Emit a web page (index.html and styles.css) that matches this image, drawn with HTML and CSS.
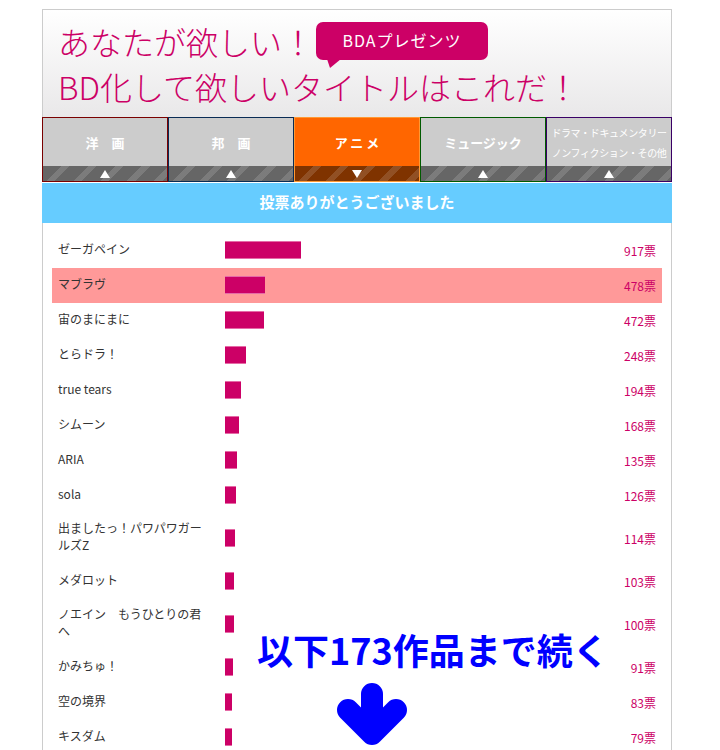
FILE: index.html
```html
<!DOCTYPE html>
<html lang="ja">
<head>
    <meta charset="UTF-8">
    <title>あなたが欲しい！BD化して欲しいタイトルはこれだ！</title>
    <link rel="stylesheet" href="styles.css">
</head>
<body>

    <div class="page">
        <!-- ヘッダー -->
        <div class="header">
            <h1 class="title">あなたが欲しい！<br>BD化して欲しいタイトルはこれだ！</h1>
            <span class="badge">BDAプレゼンツ</span>
        </div>

        <!-- ジャンルタブ -->
        <ul class="tabs">
            <li class="tab tab-yoga"><span class="tab-label">洋　画</span><span class="tab-strip"><i class="tri-up"></i></span></li>
            <li class="tab tab-houga"><span class="tab-label">邦　画</span><span class="tab-strip"><i class="tri-up"></i></span></li>
            <li class="tab tab-anime active"><span class="tab-label spaced">アニメ</span><span class="tab-strip"><i class="tri-down"></i></span></li>
            <li class="tab tab-music"><span class="tab-label">ミュージック</span><span class="tab-strip"><i class="tri-up"></i></span></li>
            <li class="tab tab-other"><span class="tab-label small">ドラマ・ドキュメンタリー<br>ノンフィクション・その他</span><span class="tab-strip"><i class="tri-up"></i></span></li>
        </ul>

        <div class="notice">投票ありがとうございました</div>

        <!-- ランキング -->
        <div class="ranking">
            <div class="row"><span class="name">ゼーガペイン</span><span class="bar-cell"><span class="bar" style="width:76px"></span></span><span class="votes">917票</span></div>
            <div class="row voted"><span class="name">マブラヴ</span><span class="bar-cell"><span class="bar" style="width:40px"></span></span><span class="votes">478票</span></div>
            <div class="row"><span class="name">宙のまにまに</span><span class="bar-cell"><span class="bar" style="width:39px"></span></span><span class="votes">472票</span></div>
            <div class="row"><span class="name">とらドラ！</span><span class="bar-cell"><span class="bar" style="width:21px"></span></span><span class="votes">248票</span></div>
            <div class="row"><span class="name">true tears</span><span class="bar-cell"><span class="bar" style="width:16px"></span></span><span class="votes">194票</span></div>
            <div class="row"><span class="name">シムーン</span><span class="bar-cell"><span class="bar" style="width:14px"></span></span><span class="votes">168票</span></div>
            <div class="row"><span class="name">ARIA</span><span class="bar-cell"><span class="bar" style="width:12px"></span></span><span class="votes">135票</span></div>
            <div class="row"><span class="name">sola</span><span class="bar-cell"><span class="bar" style="width:11px"></span></span><span class="votes">126票</span></div>
            <div class="row"><span class="name">出ましたっ！パワパワガールズZ</span><span class="bar-cell"><span class="bar" style="width:10px"></span></span><span class="votes">114票</span></div>
            <div class="row"><span class="name">メダロット</span><span class="bar-cell"><span class="bar" style="width:9px"></span></span><span class="votes">103票</span></div>
            <div class="row"><span class="name">ノエイン　もうひとりの君へ</span><span class="bar-cell"><span class="bar" style="width:9px"></span></span><span class="votes">100票</span></div>
            <div class="row"><span class="name">かみちゅ！</span><span class="bar-cell"><span class="bar" style="width:8px"></span></span><span class="votes">91票</span></div>
            <div class="row"><span class="name">空の境界</span><span class="bar-cell"><span class="bar" style="width:7px"></span></span><span class="votes">83票</span></div>
            <div class="row"><span class="name">キスダム</span><span class="bar-cell"><span class="bar" style="width:7px"></span></span><span class="votes">79票</span></div>
        </div>

        <!-- 続きの案内 -->
        <div class="more">以下173作品まで続く</div>
        <svg class="more-arrow" width="90" height="90" viewBox="0 0 90 90">
            <path d="M42 14 V54 M18 30 L42 54 L66 30" fill="none" stroke="#0000ff" stroke-width="22" stroke-linecap="round" stroke-linejoin="round"/>
        </svg>
    </div>

</body>
</html>
```

FILE: styles.css
```css
/* 基本 */
body {
    margin: 0;
    background: #fff;
    font-family: "Noto Sans CJK JP", "Noto Sans", sans-serif;
    color: #333;
}

.page {
    position: relative;
    width: 630px;
    margin: 9px 0 0 42px;
}

/* ヘッダー */
.header {
    position: relative;
    height: 108px;
    border: 1px solid #ccc;
    border-bottom: none;
    background: linear-gradient(#fff, #e9e8e9);
    box-sizing: border-box;
}

.title {
    margin: 0;
    padding: 9px 0 0 15px;
    font-size: 32px;
    font-weight: 300;
    line-height: 45px;
    color: #cc0066;
}

.badge {
    position: absolute;
    left: 273px;
    top: 12px;
    width: 172px;
    height: 38px;
    line-height: 37px;
    border-radius: 7px;
    background: #cc0066;
    color: #fff;
    font-size: 16px;
    letter-spacing: 1px;
    text-align: center;
}

.badge::after {
    content: "";
    position: absolute;
    left: 11px;
    bottom: -8px;
    border-left: 3px solid transparent;
    border-right: 11px solid transparent;
    border-top: 9px solid #cc0066;
}

/* タブ */
.tabs {
    display: flex;
    margin: 0;
    padding: 0;
    list-style: none;
}

.tab {
    display: flex;
    flex-direction: column;
    width: 126px;
    height: 65px;
    border: 1px solid #333;
    box-sizing: border-box;
    background: #cccccc;
}

.tab-yoga { border-color: #7a0000; }
.tab-houga { border-color: #0a2c55; }
.tab-anime { border-color: #ff9933; }
.tab-music { border-color: #005a00; }
.tab-other { border-color: #3a0066; }

.tab.active {
    background: #ff6600;
}

.tab-label {
    flex: 1;
    display: flex;
    align-items: center;
    justify-content: center;
    color: #fff;
    font-size: 13px;
    font-weight: bold;
    text-align: center;
}

.tab-label.spaced {
    letter-spacing: 3px;
    padding-left: 3px;
}

.tab-label.small {
    font-size: 10px;
    font-weight: normal;
    line-height: 20px;
    letter-spacing: -0.4px;
    padding-top: 1px;
}

.tab-strip {
    display: flex;
    align-items: flex-end;
    justify-content: center;
    height: 15px;
    padding-bottom: 3px;
    box-sizing: border-box;
    background:
        repeating-linear-gradient(135deg, rgba(255,255,255,0) 0 13px, rgba(255,255,255,0.14) 13px 19px),
        rgba(0, 0, 0, 0.5);
}

.tri-up {
    width: 0;
    height: 0;
    border-left: 5px solid transparent;
    border-right: 5px solid transparent;
    border-bottom: 8px solid #fff;
}

.tri-down {
    width: 0;
    height: 0;
    border-left: 5px solid transparent;
    border-right: 5px solid transparent;
    border-top: 8px solid #fff;
}

/* お知らせ */
.notice {
    height: 40px;
    line-height: 38px;
    margin-top: 1px;
    background: #66ccff;
    color: #fff;
    font-size: 15px;
    font-weight: bold;
    text-align: center;
}

/* ランキング */
.ranking {
    border-left: 1px solid #ccc;
    border-right: 1px solid #ccc;
    padding: 10px 9px;
}

.row {
    display: grid;
    grid-template-columns: 150px 1fr auto;
    column-gap: 17px;
    align-items: center;
    padding: 8px 6px 9px;
    font-size: 12px;
    line-height: 17px;
}

.row .name {
    position: relative;
    top: -2px;
}

.row.voted {
    background: #ff9999;
}

.bar-cell {
    display: flex;
    align-items: center;
}

.bar {
    display: block;
    height: 18px;
    background: #cc0066;
    box-shadow: inset 0 1px #e56aa6, inset 0 -1px #e56aa6;
}

.votes {
    color: #cc0066;
    text-align: right;
}

/* 続き */
.more {
    position: absolute;
    left: 215px;
    top: 616px;
    color: #0000ff;
    font-size: 36px;
    font-weight: bold;
    line-height: 48px;
    white-space: nowrap;
}

.more-arrow {
    position: absolute;
    left: 288px;
    top: 671px;
}
```
